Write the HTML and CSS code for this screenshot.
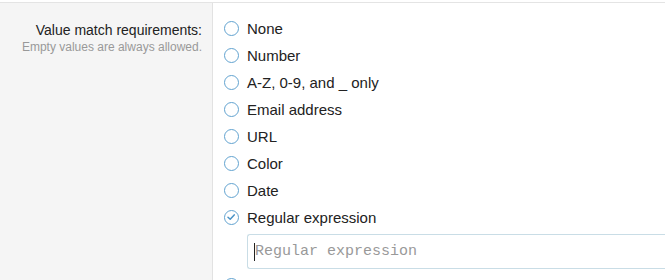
FILE: index.html
```html
<!DOCTYPE html>
<html>
<head>
<meta charset="utf-8">
<link rel="stylesheet" href="styles.css">
</head>
<body>
<div class="row">
  <div class="label-col">
    <div class="label">Value match requirements:</div>
    <div class="hint">Empty values are always allowed.</div>
  </div>
  <div class="field-col">
    <div class="opt"><span class="radio"></span><span>None</span></div>
    <div class="opt"><span class="radio"></span><span>Number</span></div>
    <div class="opt"><span class="radio"></span><span>A-Z, 0-9, and _ only</span></div>
    <div class="opt"><span class="radio"></span><span>Email address</span></div>
    <div class="opt"><span class="radio"></span><span>URL</span></div>
    <div class="opt"><span class="radio"></span><span>Color</span></div>
    <div class="opt"><span class="radio"></span><span>Date</span></div>
    <div class="opt"><span class="radio checked"><svg viewBox="0 0 14 14" width="14" height="14"><path d="M4 7.2 L6.2 9.3 L10.2 4.9" fill="none" stroke="#4a93c6" stroke-width="1.5" stroke-linecap="round" stroke-linejoin="round"/></svg></span><span>Regular expression</span></div>
    <div class="input-wrap"><div class="input"><span class="caret"></span><span class="ph">Regular expression</span></div></div>
    <div class="opt"><span class="radio"></span></div>
  </div>
</div>
</body>
</html>
```
FILE: styles.css
```css
html, body {
  margin: 0;
  padding: 0;
  background: #fff;
  overflow: hidden;
}
body {
  font-family: "Liberation Sans", Arial, sans-serif;
  width: 665px;
  height: 280px;
}
.row {
  display: flex;
  margin-top: 2px;
  border-top: 1px solid #e4e4e4;
  height: 277px;
  overflow: hidden;
}
.label-col {
  width: 213px;
  flex: none;
  background: #f5f5f5;
  border-right: 1px solid #e2e2e2;
  box-sizing: border-box;
  text-align: right;
  padding: 18px 10px 0 0;
}
.label {
  font-size: 14px;
  color: #222;
  line-height: 18px;
}
.hint {
  font-size: 12px;
  color: #999;
  line-height: 14px;
  margin-top: 1px;
}
.field-col {
  flex: 1;
  padding: 12px 0 0 11px;
}
.opt {
  display: flex;
  align-items: center;
  height: 27px;
  font-size: 15px;
  color: #222;
}
.radio {
  width: 15px;
  height: 15px;
  box-sizing: border-box;
  border: 1.5px solid #62a3d0;
  border-radius: 50%;
  margin-right: 8px;
  flex: none;
  position: relative;
}
.radio svg {
  position: absolute;
  left: -1px;
  top: -1px;
}
.input-wrap {
  padding: 3px 0 3px 23px;
}
.input {
  height: 35px;
  box-sizing: border-box;
  border: 1px solid #c9dde6;
  border-right: none;
  border-radius: 3px 0 0 3px;
  display: flex;
  align-items: center;
  padding-left: 6px;
  font-family: "Liberation Mono", "DejaVu Sans Mono", monospace;
  font-size: 15px;
  color: #999;
  width: 430px;
}
.caret {
  width: 1px;
  height: 18px;
  background: #222;
}
```
